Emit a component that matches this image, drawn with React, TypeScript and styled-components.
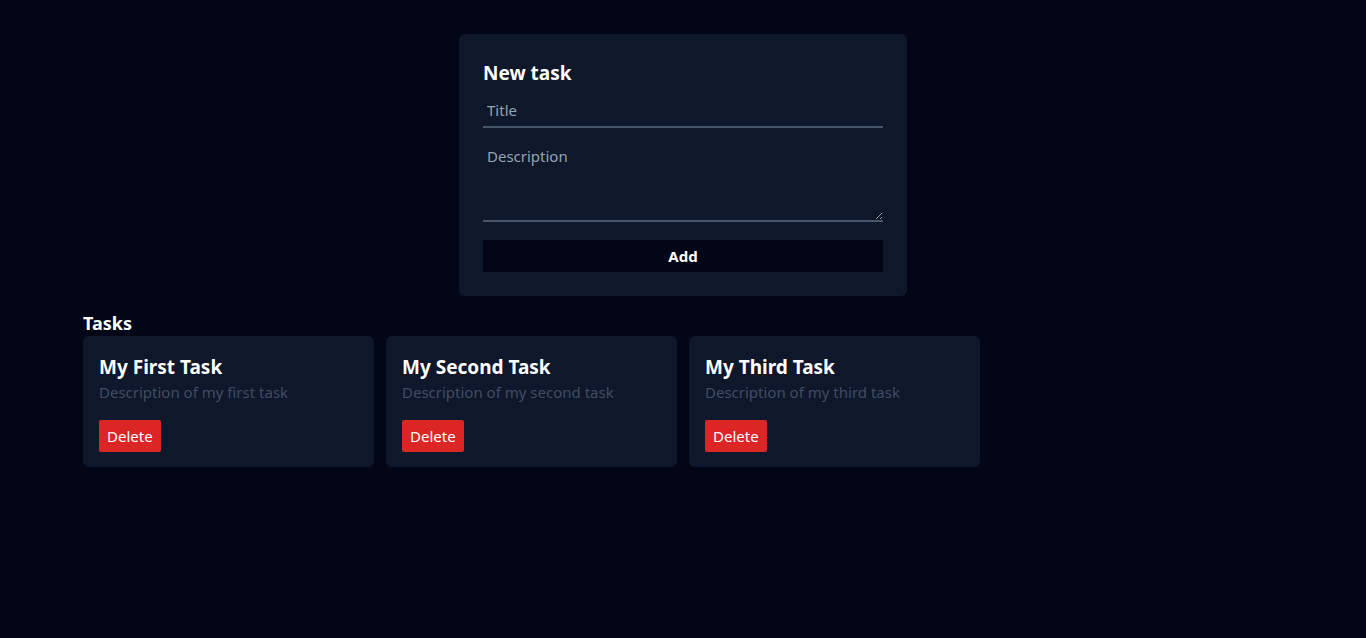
import React from "react";
import styled, { createGlobalStyle } from "styled-components";

const Global = createGlobalStyle`
  html, body { margin: 0; padding: 0; background: #020617; }
  body {
    font-family: "Noto Sans", "Open Sans", sans-serif;
    color: #ffffff;
    min-height: 638px;
  }
  * { box-sizing: border-box; }
`;

const Page = styled.main`
  max-width: 1200px;
  margin: 0 auto;
  padding-top: 34px;
`;

const FormCard = styled.form`
  width: 448px;
  margin: 0 auto;
  background: #0f172a;
  border-radius: 6px;
  padding: 24px;
  display: flex;
  flex-direction: column;
`;

const FormTitle = styled.h2`
  margin: 0 0 8px;
  padding-top: 1px;
  height: 28px;
  font-size: 19px;
  line-height: 28px;
  font-weight: 700;
  color: #ffffff;
`;

const fieldBase = `
  width: 100%;
  background: transparent;
  border: none;
  border-bottom: 2px solid #475569;
  color: #e2e8f0;
  font-family: inherit;
  font-size: 15px;
  line-height: 20px;
  padding: 6px 4px;
  outline: none;
  &::placeholder { color: #94a3b8; }
`;

const TitleInput = styled.input`
  ${fieldBase}
  height: 34px;
`;

const DescArea = styled.textarea`
  ${fieldBase}
  display: block;
  margin-top: 12px;
  height: 82px;
  resize: vertical;
`;

const AddButton = styled.button`
  margin-top: 18px;
  height: 32px;
  border: none;
  background: #020617;
  color: #ffffff;
  font-family: inherit;
  font-weight: 700;
  font-size: 15px;
  cursor: pointer;
`;

const SectionTitle = styled.h2`
  margin: 15px 0 1px;
  font-size: 18px;
  line-height: 24px;
  font-weight: 700;
`;

const Grid = styled.div`
  display: grid;
  grid-template-columns: repeat(4, 1fr);
  gap: 12px;
`;

const Card = styled.article`
  background: #0f172a;
  border-radius: 6px;
  padding: 16px 16px 15px;
`;

const CardTitle = styled.h3`
  margin: 0;
  padding-top: 1px;
  font-size: 19px;
  line-height: 28px;
  font-weight: 700;
`;

const CardDesc = styled.p`
  margin: 0;
  font-size: 15px;
  line-height: 22px;
  color: #3f4d63;
`;

const DeleteButton = styled.button`
  margin-top: 17px;
  height: 32px;
  padding: 0 8px;
  border: none;
  border-radius: 2px;
  background: #dc2626;
  color: #ffffff;
  font-family: inherit;
  font-size: 15px;
  cursor: pointer;
`;

const tasks = [
  { id: 1, title: "My First Task", description: "Description of my first task" },
  { id: 2, title: "My Second Task", description: "Description of my second task" },
  { id: 3, title: "My Third Task", description: "Description of my third task" },
];

export default function App() {
  return (
    <>
      <Global />
      <Page>
        <FormCard onSubmit={(e) => e.preventDefault()}>
          <FormTitle>New task</FormTitle>
          <TitleInput placeholder="Title" />
          <DescArea placeholder="Description" />
          <AddButton type="submit">Add</AddButton>
        </FormCard>
        <SectionTitle>Tasks</SectionTitle>
        <Grid>
          {tasks.map((t) => (
            <Card key={t.id}>
              <CardTitle>{t.title}</CardTitle>
              <CardDesc>{t.description}</CardDesc>
              <DeleteButton>Delete</DeleteButton>
            </Card>
          ))}
        </Grid>
      </Page>
    </>
  );
}
